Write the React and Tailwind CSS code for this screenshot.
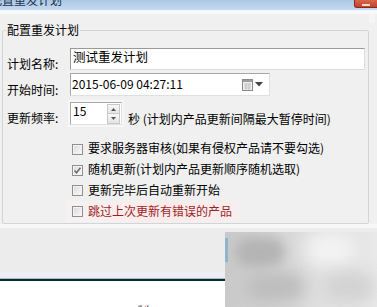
export default function App() {
  const Check = ({ checked }) => (
    <span className="flex h-[11px] w-[11px] shrink-0 items-center justify-center border border-[#8f8f8f] bg-linear-to-br from-[#d9d9d9] to-[#fafafa] shadow-[inset_0_0_0_1px_#f4f4f4]">
      {checked && (
        <svg width="9" height="9" viewBox="0 0 9 9">
          <path d="M1.5 4.5 L3.5 6.8 L7.5 1.8" fill="none" stroke="#6e6e6e" strokeWidth="1.6" />
        </svg>
      )}
    </span>
  );

  return (
    <div className="relative h-[307px] w-[377px] overflow-hidden bg-[#f0f0f0] font-['Noto_Sans_CJK_SC','Noto_Sans',sans-serif] text-[12px] text-black">
      {/* title bar */}
      <div className="flex h-[10px] items-start justify-between overflow-hidden bg-linear-to-b from-[#aac7e6] to-[#c6daef]">
        <div className="ml-[-10px] mt-[-7px] whitespace-nowrap leading-[14px] text-[#20324a]">配置重发计划</div>
        <div className="flex h-[8px] w-[23px] items-end justify-center rounded-bl-[3px] bg-linear-to-b from-[#d9654b] to-[#c2422c] border-l border-b border-[#8a2a1c]">
          <span className="mb-[1px] h-[2px] w-[8px] bg-[#f6d6cf]"></span>
        </div>
      </div>
      <div className="h-[4px] bg-[#f6f9fc]"></div>
      <div className="h-[9px] border-r-[6px] border-[#f5f5f5] mr-[2px]"></div>

      {/* group box */}
      <fieldset className="ml-[2px] w-[367px] rounded-[2px] border border-[#d0d5d9] pb-[1px]">
        <legend className="ml-[3px] px-[1px] leading-[14px]">配置重发计划</legend>

        <div className="mt-[11px] flex items-end">
          <div className="w-[67px] pl-[4px] leading-[14px] mb-[-1px]">计划名称:</div>
          <div className="h-[22px] w-[295px] border border-[#9a9a9a] border-b-[#dcdcdc] border-r-[#dcdcdc] bg-white pl-[2px] pt-[1px] leading-[14px] text-[12.5px]">
            测试重发计划
          </div>
        </div>

        <div className="mt-[3px] flex items-end">
          <div className="w-[67px] pl-[4px] leading-[14px] mb-[-1px]">开始时间:</div>
          <div className="flex h-[23px] w-[200px] items-center justify-between border border-[#a8a8a8] border-b-[#e0e0e0] border-r-[#e0e0e0] bg-white pl-[1px] pr-[6px]">
            <span className="leading-[14px] mt-[-2px]">2015-06-09 04:27:11</span>
            <span className="flex items-center gap-[2px]">
              <svg width="11" height="13" viewBox="0 0 11 13">
                <rect x="0.5" y="1.5" width="10" height="11" fill="#f2f2f2" stroke="#8a8a8a" />
                <rect x="1" y="2" width="9" height="2" fill="#9c9c9c" />
                <path d="M2 6h7M2 8h7M2 10h7M4 5v7M7 5v7" stroke="#c4c4c4" strokeWidth="1" />
              </svg>
              <svg width="8" height="5" viewBox="0 0 8 5">
                <path d="M0 0h8L4 4.5z" fill="#444" />
              </svg>
            </span>
          </div>
        </div>

        <div className="mt-[6px] flex items-end">
          <div className="w-[67px] pl-[4px] leading-[14px]">更新频率:</div>
          <div className="flex h-[23px] w-[52px] border border-[#a8a8a8] border-b-[#e0e0e0] border-r-[#e0e0e0] bg-white shadow-[0_0_0_2px_#f7f7f7]">
            <span className="flex-1 pl-[2px] pt-[1px] leading-[14px]">15</span>
            <span className="mr-[1px] mt-[1px] flex w-[13px] flex-col">
              <span className="flex h-[10px] items-center justify-center border border-[#c8c8c8] bg-linear-to-b from-[#f8f8f8] to-[#e4e4e4]">
                <svg width="5" height="3" viewBox="0 0 5 3"><path d="M0 3h5L2.5 0z" fill="#555" /></svg>
              </span>
              <span className="flex h-[10px] items-center justify-center border border-t-0 border-[#c8c8c8] bg-linear-to-b from-[#f8f8f8] to-[#e4e4e4]">
                <svg width="5" height="3" viewBox="0 0 5 3"><path d="M0 0h5L2.5 3z" fill="#555" /></svg>
              </span>
            </span>
          </div>
          <div className="ml-[6px] whitespace-nowrap leading-[14px] mb-[-1px]">秒 (计划内产品更新间隔最大暂停时间)</div>
        </div>

        <div className="mt-[14px] flex flex-col pl-[69px]">
          <div className="flex h-[21px] items-center gap-[5px]">
            <Check />
            <span className="leading-[14px] mt-[-3px]">要求服务器审核(如果有侵权产品请不要勾选)</span>
          </div>
          <div className="flex h-[20px] items-center gap-[5px]">
            <Check checked />
            <span className="leading-[14px] mt-[-2px]">随机更新(计划内产品更新顺序随机选取)</span>
          </div>
          <div className="flex h-[21px] items-center gap-[5px]">
            <Check />
            <span className="leading-[14px] mt-[-2px]">更新完毕后自动重新开始</span>
          </div>
          <div className="ml-[-6px] flex h-[21px] w-[172px] items-center gap-[5px] bg-linear-to-r from-[#f6f2f2] via-[#fcebeb] to-[#f7eeee] pl-[6px]">
            <Check />
            <span className="leading-[14px] mt-[-2px] text-[#9c1f28]">跳过上次更新有错误的产品</span>
          </div>
        </div>
      </fieldset>

      {/* lower panel */}
      <div className="h-[4px] bg-[#f7f7f7]"></div>
      <div className="h-[44px] bg-[#ececec]"></div>
      <div className="h-[6px] bg-[#efecf6]"></div>
      <div className="h-[1px] bg-[#8ec9cf]"></div>
      <div className="h-[2px] bg-[#0f2b2c]"></div>
      <div className="h-[27px] bg-white pl-[137px] pt-[23px]">
        <span className="block leading-[14px] text-[12px] text-[#333]">制</span>
      </div>

      {/* blurred overlay */}
      <div className="absolute left-[225px] top-[232px] h-[75px] w-[152px] overflow-hidden bg-linear-to-r from-[#c9c9c9] via-[#dcdcdc] to-[#e9e9e9]">
        <div className="absolute left-[0px] top-[6px] h-[24px] w-[3px] bg-[#8fb4cf]"></div>
        <div className="absolute left-[10px] top-[5px] h-[30px] w-[50px] rounded-full bg-[#b4b4b4] blur-[6px]"></div>
        <div className="absolute left-[20px] top-[40px] h-[30px] w-[60px] rounded-full bg-[#bdbdbd] blur-[8px]"></div>
        <div className="absolute left-[80px] top-[0px] h-[35px] w-[50px] rounded-full bg-[#f2f2f2] blur-[8px]"></div>
        <div className="absolute left-[100px] top-[40px] h-[30px] w-[50px] rounded-full bg-[#d2d2d2] blur-[8px]"></div>
      </div>
    </div>
  );
}
